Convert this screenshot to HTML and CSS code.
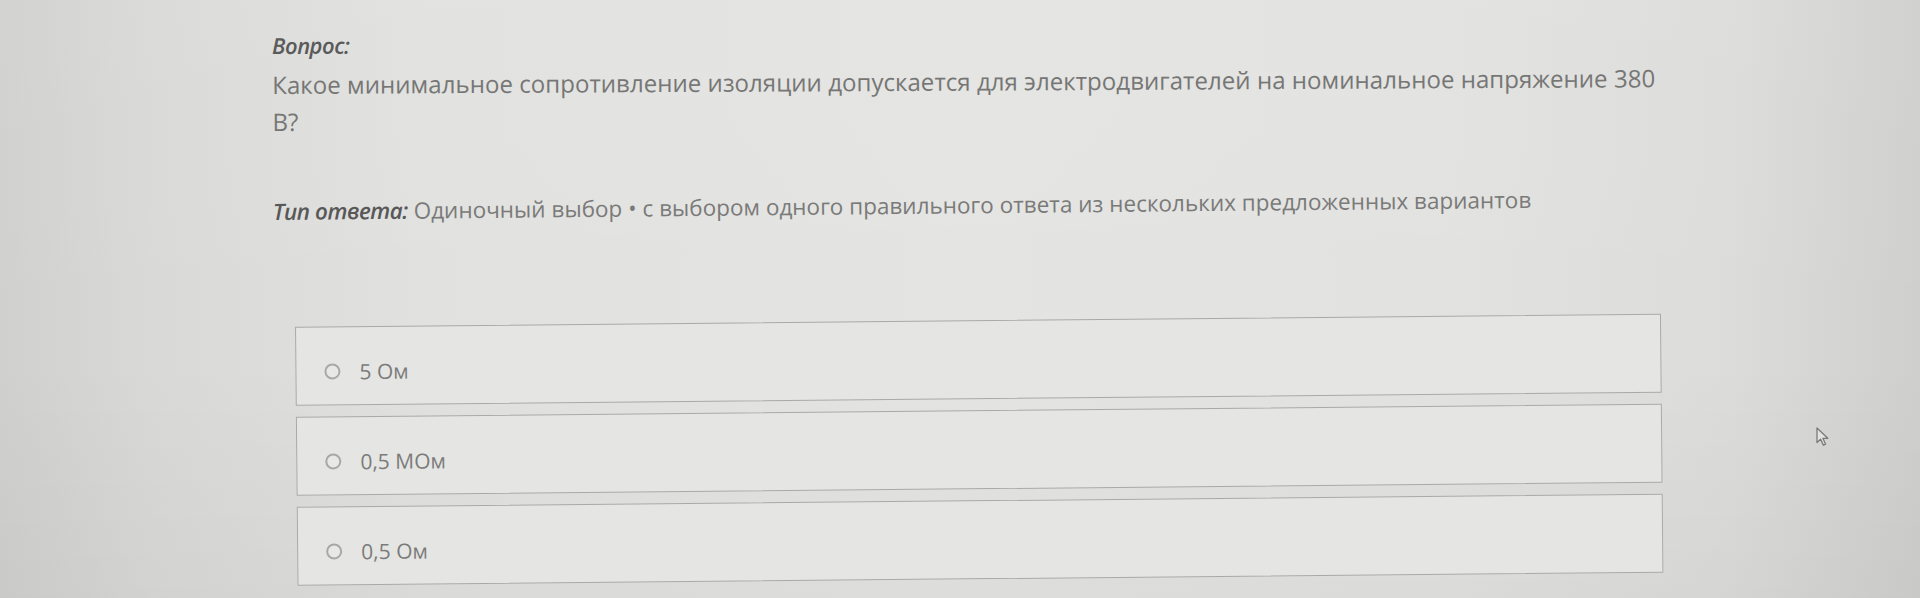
FILE: index.html
```html
<!DOCTYPE html>
<html lang="ru">
<head>
<meta charset="utf-8">
<title>Вопрос</title>
<link rel="stylesheet" href="styles.css">
</head>
<body>
<main class="page">
  <div class="label">Вопрос:</div>
  <div class="question">Какое минимальное сопротивление изоляции допускается для электродвигателей на номинальное напряжение 380 В?</div>
  <section class="answers">
    <div class="type"><span class="type-label">Тип ответа:</span> Одиночный выбор • с выбором одного правильного ответа из нескольких предложенных вариантов</div>
    <div class="options">
      <label class="option"><span class="radio"></span><span class="option-text">5 Ом</span></label>
      <label class="option"><span class="radio"></span><span class="option-text">0,5 МОм</span></label>
      <label class="option"><span class="radio"></span><span class="option-text">0,5 Ом</span></label>
    </div>
  </section>
</main>
<svg class="cursor" width="14" height="20" viewBox="0 0 14 20"><path d="M1 1 L1 15.5 L4.6 12.2 L7.4 18.2 L9.6 17.2 L6.9 11.3 L11.8 11.3 Z" fill="#e2e2e0" stroke="#7a7a7a" stroke-width="1.3" stroke-linejoin="round"/></svg>
</body>
</html>
```
FILE: styles.css
```css
html, body {
  margin: 0;
  padding: 0;
}
body {
  width: 1920px;
  height: 598px;
  overflow: hidden;
  position: relative;
  font-family: "Open Sans", "Noto Sans", "DejaVu Sans", sans-serif;
  background:
    linear-gradient(180deg, rgba(255,255,255,0.05) 0%, rgba(0,0,0,0.0) 60%, rgba(0,0,0,0.03) 100%),
    linear-gradient(90deg, #d0d0ce 0%, #d9d9d7 8%, #e1e1df 22%, #e4e4e2 50%, #e2e2e0 75%, #dcdcda 90%, #cfcfcd 100%);
}
.page {
  padding: 31px 0 0 272px;
  transform: rotate(-0.28deg);
  transform-origin: 272px 40px;
}
.label {
  font-size: 22px;
  line-height: 28px;
  font-style: italic;
  font-weight: 600;
  color: #5a5a5a;
  letter-spacing: -0.5px;
}
.question {
  margin-top: 7px;
  width: 1400px;
  font-size: 24.1px;
  line-height: 37px;
  color: #767675;
}
.answers {
  margin-top: 57px;
  transform: rotate(-0.27deg);
  transform-origin: 0 0;
}
.type {
  font-size: 22.5px;
  line-height: 30px;
  color: #7a7a79;
}
.type-label {
  font-style: italic;
  font-weight: 600;
  color: #585858;
  letter-spacing: -0.5px;
}
.options {
  margin: 100px 0 0 21px;
  width: 1366px;
  display: flex;
  flex-direction: column;
  gap: 11px;
}
.option {
  box-sizing: border-box;
  height: 79px;
  border: 1.5px solid #a9a9a7;
  background: #e5e5e3;
  display: flex;
  align-items: center;
  padding: 10px 0 0 28px;
  gap: 19px;
}
.radio {
  box-sizing: border-box;
  width: 16px;
  height: 16px;
  border: 2px solid #a8a8a7;
  border-radius: 50%;
  background: #e8e8e6;
}
.option-text {
  font-size: 21px;
  color: #7b7b7a;
}
.cursor {
  position: absolute;
  left: 1816px;
  top: 427px;
}
```
